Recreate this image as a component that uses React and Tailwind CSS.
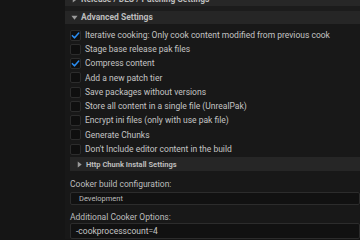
import React from 'react'

const font = { fontFamily: 'Roboto, "Noto Sans", sans-serif' }

const options = [
  { label: 'Iterative cooking: Only cook content modified from previous cook', checked: true },
  { label: 'Stage base release pak files', checked: false },
  { label: 'Compress content', checked: true },
  { label: 'Add a new patch tier', checked: false },
  { label: 'Save packages without versions', checked: false },
  { label: 'Store all content in a single file (UnrealPak)', checked: false },
  { label: 'Encrypt ini files (only with use pak file)', checked: false },
  { label: 'Generate Chunks', checked: false },
  { label: "Don't Include editor content in the build", checked: false },
]

const Caret = ({ open }) => (
  <svg width="7" height="7" viewBox="0 0 8 8" className="shrink-0">
    {open ? (
      <path d="M0.5 2 L7.5 2 L4 6.5 Z" fill="#9a9a9a" />
    ) : (
      <path d="M2 0.5 L6.5 4 L2 7.5 Z" fill="#9a9a9a" />
    )}
  </svg>
)

const Check = ({ checked }) => (
  <div className="w-[11px] h-[11px] shrink-0 rounded-[2px] bg-[#0f0f0f] border border-[#2c2c2c] flex items-center justify-center">
    {checked && (
      <svg width="9" height="9" viewBox="0 0 10 10">
        <path d="M1.5 5.2 L4 7.6 L8.6 2.2" fill="none" stroke="#2a8cf0" strokeWidth="1.7" strokeLinecap="round" strokeLinejoin="round" />
      </svg>
    )}
  </div>
)

export default function App() {
  return (
    <div className="w-[360px] h-[240px] overflow-hidden bg-[#151515] flex items-start" style={font}>
      <div className="w-[65px] shrink-0" />
      <div className="flex-1 flex flex-col">
        <div className="-mt-[8px] h-[14px] bg-[#272727] flex items-center pl-[6px] text-[8.5px] font-bold text-[#bdbdbd] whitespace-nowrap">
          <Caret />
          <span className="ml-[3px]">Release / DLC / Patching Settings</span>
        </div>
        <div className="h-[5px] bg-[#1c1c1c]" />
        <div className="h-[13px] bg-[#262626] flex items-center pl-[6px] text-[8.5px] font-bold text-[#bdbdbd] whitespace-nowrap">
          <Caret open />
          <span className="ml-[3px]">Advanced Settings</span>
        </div>
        <div className="flex flex-col bg-[#181818] pl-[5px] pt-[4px]">
          {options.map((o) => (
            <div key={o.label} className="h-[14.25px] flex items-center gap-[4px] whitespace-nowrap text-[8.5px] text-[#c4c4c4]">
              <Check checked={o.checked} />
              <span>{o.label}</span>
            </div>
          ))}
          <div className="mt-[1px] h-[14px] bg-[#262626] flex items-center pl-[6px] text-[7.5px] font-bold text-[#bdbdbd] whitespace-nowrap">
            <Caret />
            <span className="ml-[3px]">Http Chunk Install Settings</span>
          </div>
          <div className="mt-[7px] text-[8.5px] text-[#bdbdbd] leading-[12px]">Cooker build configuration:</div>
          <div className="mt-[2px] h-[13px] bg-[#111111] border border-[#2c2c2c] rounded-[2px] flex items-center pl-[8px] text-[7.5px] text-[#bdbdbd]">
            Development
          </div>
          <div className="mt-[6px] text-[8.5px] text-[#bdbdbd] leading-[12px]">Additional Cooker Options:</div>
          <div className="h-[16px] bg-[#111111] border border-[#2c2c2c] rounded-[2px] flex items-center pl-[5px] text-[8.5px] text-[#c4c4c4]">
            -cookprocesscount=4
          </div>
        </div>
      </div>
    </div>
  )
}
